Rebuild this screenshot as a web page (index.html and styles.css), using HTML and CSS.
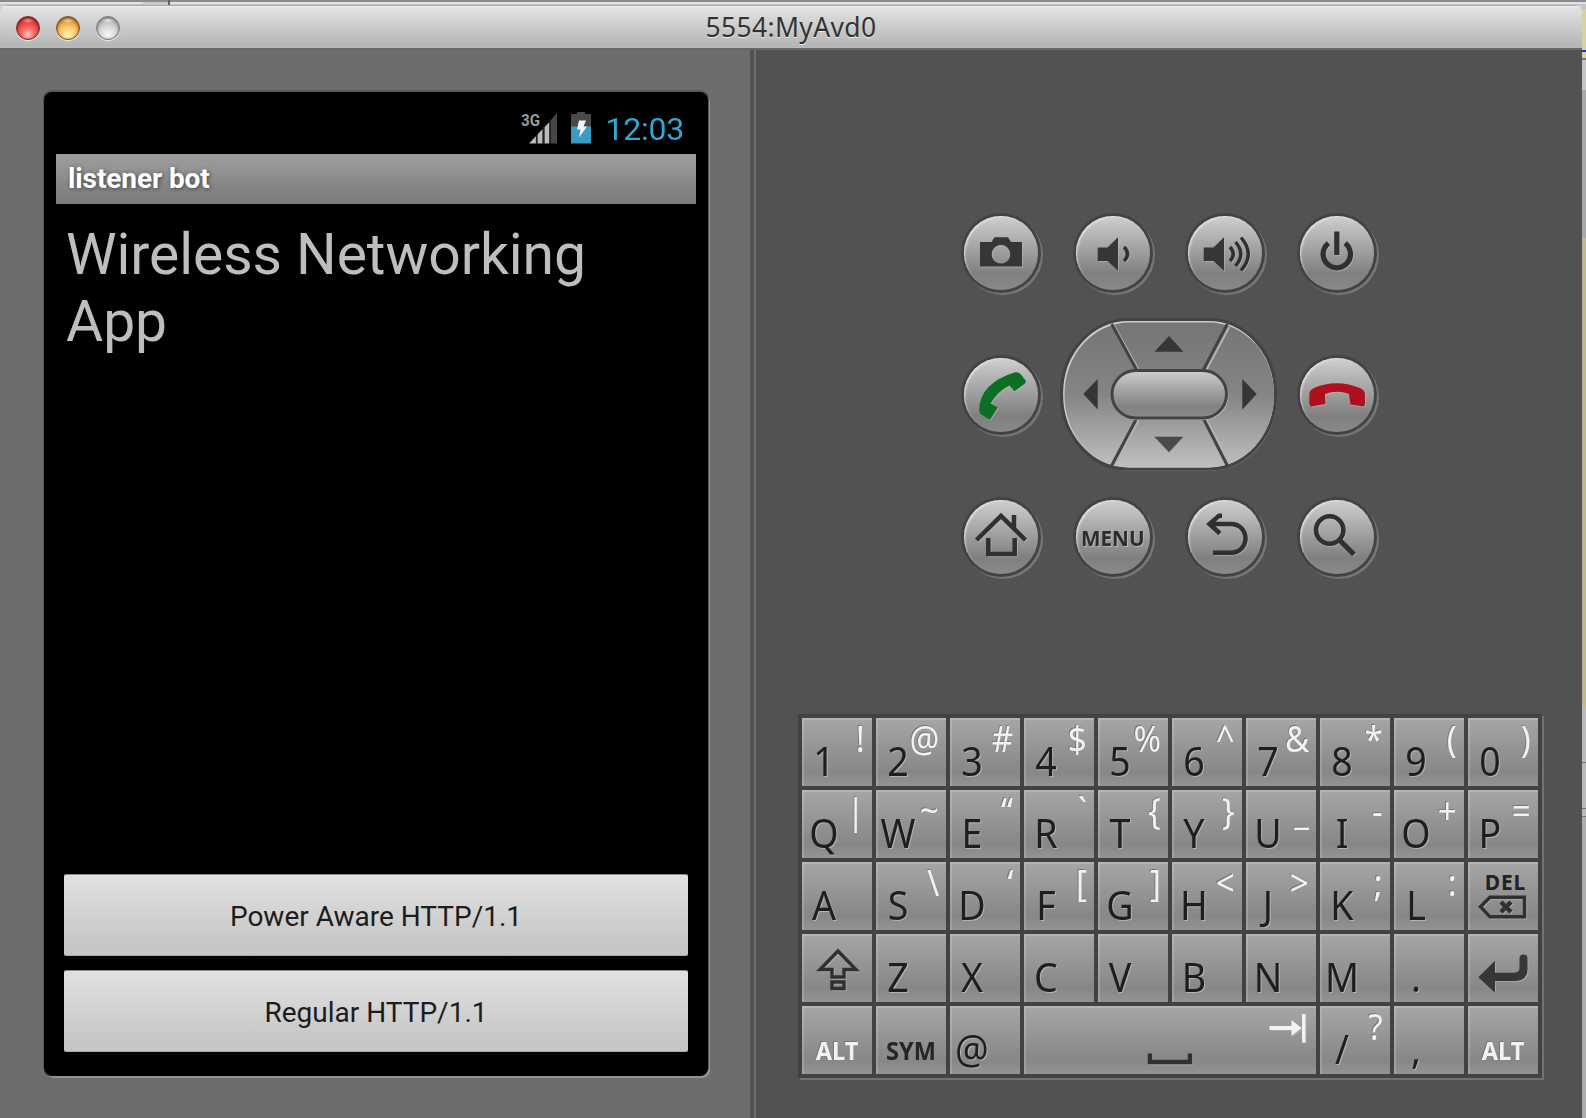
FILE: index.html
```html
<!DOCTYPE html>
<html lang="en">
<head>
<meta charset="utf-8">
<title>5554:MyAvd0</title>
<link rel="stylesheet" href="styles.css">
</head>
<body>
<div class="desktop">
  <div class="backdrop-top"><span class="tab-edge"></span></div>
  <div class="middle">
  <div class="window">
    <header class="titlebar">
      <div class="lights"><i class="light red"></i><i class="light amber"></i><i class="light clear"></i></div>
      <h1>5554:MyAvd0</h1>
    </header>
    <main class="emulator">
      <section class="device-pane">
        <div class="device">
          <div class="statusbar">
            <svg class="status-icons" width="72" height="36" viewBox="0 0 72 36">
              <text x="0" y="15.500" class="net" textLength="19" lengthAdjust="spacingAndGlyphs">3G</text>
              <path class="bar" d="M8 33.500 15 26v7.500zM16.500 24.500 21.500 19v14.500h-5zM23.500 17 28.500 12v21.500h-5z"/>
              <path class="bar-off" d="M29.500 10.500 36 3v30.500h-6.500z"/>
              <path class="bar-gap" d="M15.500 25v9M22.500 17v17M29 10v24"/>
              <path class="cell-empty" d="M56 2h8v2h6v13H50V4h6z"/><path class="cell-full" d="M50 16.500h20v17H50z"/>
              <path class="bolt" d="M58 10.500h7l-2.500 6h3.500l-8 11 1.500-8H56z"/>
            </svg>
            <span class="clock">12:03</span>
          </div>
          <div class="app-title">listener bot</div>
          <p class="headline">Wireless Networking<br>App</p>
          <div class="actions">
            <button>Power Aware HTTP/1.1</button>
            <button>Regular HTTP/1.1</button>
          </div>
        </div>
      </section>
      <section class="controls-pane">
        <div class="pad">
          <div class="disc"><svg viewBox="0 0 74 74"><path fill-rule="evenodd" d="M16 26h11.500l3-4.700h13.500l3 4.700h11v24.500H16zM37 29a9.300 9.300 0 1 0 .01 0z"/></svg></div>
          <div class="disc"><svg viewBox="0 0 74 74"><path d="M21.700 31.500h9.800L42 21.300v33.400L31.500 45h-9.800z"/><path class="ln thin" d="M48 31q7 7 0 14"/></svg></div>
          <div class="disc"><svg viewBox="0 0 74 74"><path d="M15.700 31.500h9.800L36 21.300v33.400L25.500 45h-9.800z"/><path class="ln thin" d="M42 31q6.500 7 0 14M47.500 26q10.500 12 0 24M53 21.500q14.500 16.500 0 33"/></svg></div>
          <div class="disc"><svg viewBox="0 0 74 74"><path class="ln wide" d="M28.500 27.200a13.700 13.700 0 1 0 16.600 0M36.800 15.500V39"/></svg></div>

          <div class="disc"><svg viewBox="0 0 74 74" class="call"><path d="M51 14.300Q54.500 13.500 57 16.500L61.500 22.500Q62.300 24 61 25.500L50.500 33.200 45.500 27.500Q34 33 26.500 45.500L33.700 49.500 26.500 61Q25.500 62 24 61L16.500 56Q15 54.500 15.200 51 16.500 25 51 14.300z"/></svg></div>
          <svg class="dpad" width="220" height="156" viewBox="0 0 220 156">
            <defs>
              <linearGradient id="ring" x1="0" y1="0" x2="0" y2="1"><stop offset="0" stop-color="#757575"/><stop offset=".5" stop-color="#858585"/><stop offset="1" stop-color="#c0c0c0"/></linearGradient>
              <linearGradient id="pill" x1="0" y1="0" x2="0" y2="1"><stop offset="0" stop-color="#cecece"/><stop offset=".75" stop-color="#828282"/><stop offset="1" stop-color="#898989"/></linearGradient>
            </defs>
            <rect x="4" y="4" width="214" height="150" rx="67" ry="74" fill="#777"/>
            <rect x="2.500" y="2.500" width="214" height="149.500" rx="67" ry="74" fill="#cbcbcb" stroke="#434343" stroke-width="3.200"/>
            <rect x="5.500" y="5.500" width="209.500" height="145" rx="65" ry="72" fill="url(#ring)"/>
            <path class="glint" d="M54.700 8 79.700 53M170.300 10 146.300 55M79.700 103 54.700 149M146.500 101 171 147"/>
            <path class="spoke" d="M52.700 7 77.700 53M168.300 7 144.300 53M77.700 101.300 52.700 148.500M144.300 101.300 168.300 148.500"/>
            <rect x="54.500" y="55" width="115" height="48" rx="24" fill="#b2b2b2"/>
            <rect x="53" y="53.500" width="114.500" height="47.500" rx="23.700" fill="url(#pill)" stroke="#434343" stroke-width="3"/>
            <path d="M110 19 124.500 34.700h-29zM24.300 77 38.700 62v30.500zM197.700 77 183.300 62v30.500z"/>
            <path class="soft" d="M95.300 119.700h29L110 135.300z"/>
          </svg>
          <div class="disc end"><svg viewBox="0 0 74 74" class="hang"><path d="M9.300 46V36Q9.500 32 14 30 37 20.500 61 30.500 64.500 32 65 36V46L63.800 48.500 50.500 46.500 49 36Q37 31.500 25 36L25.500 46 11 48.500z"/></svg></div>

          <div class="disc"><svg viewBox="0 0 74 74"><path class="ln" d="M12.500 40 37 15.800 61.500 40M50 15v13M24.300 38v16h26.400V38"/></svg></div>
          <div class="disc menu"><span>MENU</span></div>
          <div class="disc"><svg viewBox="0 0 74 74"><path class="ln" d="M25 52.700h17.500c20 0 20-28.700 0-28.700H22M34 15.700H31L21.500 24 32 33.500"/></svg></div>
          <div class="disc"><svg viewBox="0 0 74 74"><circle class="ln" cx="29.700" cy="30" r="13.700"/><path class="ln wide" d="M40.500 41 54 54.500"/></svg></div>
        </div>
        <div class="keyboard">
          <div class="key"><b>1</b><s>!</s></div><div class="key"><b>2</b><s>@</s></div><div class="key"><b>3</b><s>#</s></div><div class="key"><b>4</b><s>$</s></div><div class="key"><b>5</b><s>%</s></div><div class="key"><b>6</b><s>^</s></div><div class="key"><b>7</b><s>&amp;</s></div><div class="key"><b>8</b><s>*</s></div><div class="key"><b>9</b><s>(</s></div><div class="key"><b>0</b><s>)</s></div>
          <div class="key"><b>Q</b><s>|</s></div><div class="key"><b>W</b><s>~</s></div><div class="key"><b>E</b><s>“</s></div><div class="key"><b>R</b><s>`</s></div><div class="key"><b>T</b><s>{</s></div><div class="key"><b>Y</b><s>}</s></div><div class="key"><b>U</b><s>_</s></div><div class="key"><b>I</b><s>-</s></div><div class="key"><b>O</b><s>+</s></div><div class="key"><b>P</b><s>=</s></div>
          <div class="key"><b>A</b></div><div class="key"><b>S</b><s>\</s></div><div class="key"><b>D</b><s>‘</s></div><div class="key"><b>F</b><s>[</s></div><div class="key"><b>G</b><s>]</s></div><div class="key"><b>H</b><s>&lt;</s></div><div class="key"><b>J</b><s>&gt;</s></div><div class="key"><b>K</b><s>;</s></div><div class="key"><b>L</b><s>:</s></div>
          <div class="key"><span class="del">DEL</span><svg width="70" height="68" viewBox="0 0 70 68"><path class="ln thin" d="M12.500 44.700 22 35.200h34.500V54.800H22z"/><path class="ln" d="M33 40l10 10M43 40 33 50"/></svg></div>
          <div class="key"><svg width="70" height="68" viewBox="0 0 70 68"><path class="ln thin" d="M36 17 54 35.500H42V43H30V35.500H18zM30 48h12v6.500H30z"/></svg></div>
          <div class="key"><b>Z</b></div><div class="key"><b>X</b></div><div class="key"><b>C</b></div><div class="key"><b>V</b></div><div class="key"><b>B</b></div><div class="key"><b>N</b></div><div class="key"><b>M</b></div><div class="key"><b>.</b></div>
          <div class="key"><svg width="70" height="68" viewBox="0 0 70 68"><path d="M10.300 43.300 27 26.700V38.700H46Q51.500 38.500 51.500 34V23.500Q52 20.500 55.500 20.500T59.500 23.500V35Q59.500 47 46 47H27V58.700z"/></svg></div>
          <div class="key"><span class="word light-word">ALT</span></div><div class="key"><span class="word">SYM</span></div><div class="key"><b>@</b></div>
          <div class="key space"><svg width="292" height="68" viewBox="0 0 292 68"><path class="ln" d="M126 47.500v8.500h40v-8.500"/><path class="pale" d="M245.500 20h22v-6l10 8-10 8v-6h-22zM278 8h3.500v28.500H278z"/></svg></div>
          <div class="key"><b>/</b><s>?</s></div><div class="key"><b>,</b></div><div class="key"><span class="word light-word">ALT</span></div>
        </div>
      </section>
    </main>
  </div>
  <div class="backdrop-side"></div>
  </div>
</div>
</body>
</html>
```
FILE: styles.css
```css
* { box-sizing: border-box; }
body { margin: 0; font-family: "Noto Sans", sans-serif; overflow: hidden; }
.desktop { width: 1586px; height: 1118px; display: flex; flex-direction: column; background: #cfcfcf; }
.backdrop-top { height: 5px; flex: none; padding-left: 143px; background: linear-gradient(#8b8b8b 0 2px, #e2e2e2 2px 4px, #c6c6c6 4px); }
.tab-edge { display: block; width: 27px; height: 5px; background: linear-gradient(#8b8b8b 0 2px, #c8c8c8 2px); border-right: 2px solid #636363; }
.middle { flex: 1; display: flex; }
.window { width: 1582px; display: flex; flex-direction: column; flex: none; }
.titlebar {
  height: 43px; display: grid; grid-template-columns: 1fr auto 1fr; align-items: center;
  background: linear-gradient(#a8a8a8 0 1px, #f2f2f2 1px, #e2e2e2 3px, #b4b4b4 42px, #c0c0c0);
  border-radius: 8px 8px 0 0;
}
.titlebar h1 { margin: 0; padding-top: 1px; font-weight: 400; font-size: 26.500px; line-height: 34px; color: #333; text-shadow: 0 1px 0 #eee; letter-spacing: .35px; }
.lights { display: flex; gap: 16px; padding: 3px 0 0 16px; }
.light { width: 24px; height: 24px; border-radius: 50%; box-shadow: 0 1px 1px #eee; }
.light.red { background: radial-gradient(ellipse 7px 3px at 50% 14%, #fff8, transparent), radial-gradient(circle at 50% 82%, #ffc4c0 0, #f76763 35%, #e84745 60%, #8e1b1b 100%); border: 1px solid #7e2524; box-shadow: inset 0 1px 3px #7e1514, 0 1px 1px #eee; }
.light.amber { background: radial-gradient(ellipse 7px 3px at 50% 14%, #fffa, transparent), radial-gradient(circle at 50% 85%, #fff6b5 0, #f9cd70 38%, #eeac4a 60%, #885013 100%); border: 1px solid #795025; box-shadow: inset 0 1px 3px #8a4d10, 0 1px 1px #eee; }
.light.clear { background: radial-gradient(ellipse 7px 3px at 50% 14%, #fffc, transparent), radial-gradient(circle at 50% 80%, #f8f8f8 0, #d4d4d4 45%, #bcbcbc 65%, #777 100%); border: 1px solid #7b7b7b; box-shadow: inset 0 1px 3px #777, 0 1px 1px #eee; }
.backdrop-side {
  flex: 1;
  background: linear-gradient(#c4c4c4 0 4px, #d7d1a7 4px 45px, #1638cc 45px 47px, #d7d1a7 47px 53px, #777 53px 55px, #c6c6c6 55px 85px, #a8a8a8 85px 233px, #c0b794 233px 702px, #bbb 702px 757px, #777 757px 758px, #bbb 758px 803px, #777 803px 804px, #bbb 804px 811px, #777 811px 812px, #adadad 812px);
}
.emulator { flex: 1; display: flex; background: #525252; border-top: 2px solid #686868; }
.device-pane { width: 756px; flex: none; padding: 42px 0 0 44px; background: #6d6d6d; border-right: 2px solid #6e6e6e; box-shadow: inset -4px 0 0 #525252; }
.device {
  width: 664px; height: 984px; padding: 12px; display: flex; flex-direction: column;
  background: #000; border-radius: 8px; font-family: Roboto, sans-serif;
  box-shadow: 0 -1px 0 1px #585858, 2px 2px 0 #929292;
}
.statusbar { height: 50px; flex: none; display: flex; justify-content: flex-end; gap: 13px; padding-right: 12px; }
.status-icons { margin-top: 6px; }
.net { font: 700 17px Roboto, sans-serif; fill: #999; }
svg .bar { fill: #bcbabc; }
svg .bar-off { fill: #454745; }
svg .bar-gap { fill: none; stroke: #222; stroke-width: 1.200; }
svg .cell-empty { fill: #4a4a4a; }
svg .cell-full { fill: #3a9cc4; }
svg .bolt { fill: #f3f6f8; }
.clock { font-size: 32px; line-height: 50px; color: #33b5e5; opacity: .92; letter-spacing: -.25px; }
.app-title {
  height: 50px; flex: none; padding-left: 12px; font-size: 28px; line-height: 49px; font-weight: 700; color: #fff; letter-spacing: -.1px;
  background: linear-gradient(#9e9c9e, #939593 30%, #878787 60%, #7a7c7a); text-shadow: 1px 1px 4px #444;
}
.headline { margin: 17px 0 0 10px; font-size: 57px; line-height: 67px; color: #bebebe; letter-spacing: -.05px; }
.actions { margin-top: auto; display: flex; flex-direction: column; gap: 14px; padding: 0 8px 12px; }
.actions button {
  height: 82px; padding: 3px 0 0; border: 0; border-top: 1px solid #8b8b8b; border-bottom: 1px solid #aaa; border-radius: 2px;
  font: 400 28px/78px Roboto, sans-serif; color: #1c1c1c; background: linear-gradient(#e2e1e2, #d6d5d6 40%, #cbcacb 75%, #c4c5c4);
}
.controls-pane { flex: 1; display: flex; flex-direction: column; padding: 166px 38px 0 42px; }
.pad { display: grid; grid-template: repeat(3, 74px) / repeat(4, 74px); gap: 68px 38px; margin-left: 166px; }
.disc {
  border-radius: 50%; background: linear-gradient(#cfcfcf, #808080 78%, #898989);
  box-shadow: inset 2px 2px 2px -1px #dedede, 0 0 0 3px #434343, 2px 2px 0 3px #757575;
}
.disc svg { display: block; width: 74px; height: 74px; }
.disc.end { grid-column: 4; }
.disc.menu { display: flex; justify-content: center; }
.menu span { font-size: 22px; font-weight: 700; line-height: 74px; color: #2d2d2d; text-shadow: 1px 1px 0 #b8b8b8; transform: scaleX(.94); }
svg path, svg circle { fill: #363636; }
.disc svg, .key svg { filter: drop-shadow(1px 1px 0 #bbb8); }
svg .ln { fill: none; stroke: #303030; stroke-width: 4.500; }
svg .thin { stroke-width: 3.400; }
svg .wide { stroke-width: 5.200; }
svg .soft { fill: #4a4a4a; }
svg .pale { fill: #f2f2f2; }
.call path { fill: #0d6e25; }
.hang path { fill: #b0101b; }
.dpad { grid-column: 2 / 4; grid-row: 2; justify-self: center; align-self: center; }
.dpad .spoke { fill: none; stroke: #434343; stroke-width: 3; }
.dpad .glint { fill: none; stroke: #b4b4b4; stroke-width: 2; }
.keyboard {
  display: grid; grid-template: repeat(5, 68px) / repeat(10, 70px); gap: 4px; margin-top: 140px; padding: 4px; width: 744px;
  background: #424242; box-shadow: 2px 2px 0 #727272;
}
.key { display: grid; align-items: start; background: linear-gradient(#a6a6a6, #878787 80%, #939393); box-shadow: inset 2px 2px 0 #ffffff2b; }
.key > * { grid-area: 1 / 1; }
.key b { width: 44px; margin-top: 19px; font-weight: 400; font-size: 40px; line-height: 48px; text-align: center; color: #1e1e1e; transform: scaleX(.94); text-shadow: 1px 1px 0 #b3b3b3; }
.key s { justify-self: end; margin: 1px 7px 0 0; text-decoration: none; font-size: 36px; line-height: 40px; color: #f2f2f2; transform: scaleX(.92); transform-origin: right; text-shadow: -1px -1px 0 #777; }
.key.space { grid-column: span 4; }
.word { font-size: 25px; font-weight: 700; line-height: 34px; margin-top: 27px; text-align: center; color: #262626; transform: scaleX(.94); }
.light-word { color: #f2f2f2; text-shadow: -1px -1px 0 #777; }
.del { font-size: 21px; font-weight: 700; line-height: 24px; margin-top: 8px; text-align: center; padding-left: 5px; color: #222; letter-spacing: .8px; }
```
